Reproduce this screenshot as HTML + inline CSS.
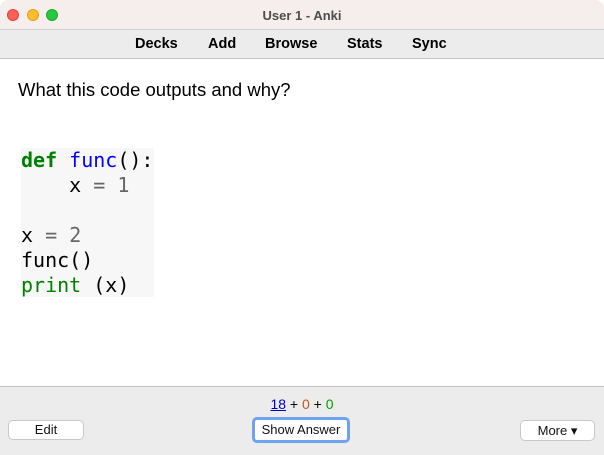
<!DOCTYPE html>
<html><head><style>
*{margin:0;padding:0;box-sizing:border-box}
body{width:604px;height:455px;overflow:hidden;background:#fff;font-family:"Liberation Sans",sans-serif;position:relative}
.title{position:absolute;left:0;top:0;width:604px;height:30px;background:#f6eded;border-radius:8px 8px 0 0;border-bottom:1px solid #cfcfcf}
.dot{position:absolute;top:9px;width:12px;height:12px;border-radius:50%}
.title .t{position:absolute;left:0;right:0;top:8px;text-align:center;font-size:13px;font-weight:bold;color:#4d4d4d}
.tool{position:absolute;top:30px;left:0;width:604px;height:29px;background:#ececec;border-bottom:1px solid #c8c8c8}
.tool span{position:absolute;top:6px;font-size:14.5px;font-weight:bold;color:#000}
.q{position:absolute;left:18px;top:79px;font-size:18.5px;color:#000}
pre{position:absolute;left:21px;top:148px;width:133px;height:149px;background:#f7f7f7;font-family:"DejaVu Sans Mono",monospace;font-size:20px;line-height:25px;color:#000}
.k{color:#008000;font-weight:bold}.f{color:#0000ff}.n{color:#666}.g{color:#008000}
.bot{position:absolute;left:0;top:386px;width:604px;height:69px;background:#ececec;border-top:1px solid #c0c0c0}
.btn{position:absolute;background:#fff;border:1px solid #c8c8c8;border-radius:5px;font-size:13px;text-align:center;color:#111}
</style></head><body>
<div class="title">
<div class="dot" style="left:7px;background:#fe5f57;border:1px solid #e0443e"></div>
<div class="dot" style="left:27px;background:#febc2e;border:1px solid #dea123"></div>
<div class="dot" style="left:46px;background:#28c840;border:1px solid #1aab29"></div>
<div class="t">User 1 - Anki</div>
</div>
<div class="tool">
<span style="left:135px">Decks</span><span style="left:208px">Add</span><span style="left:265px">Browse</span><span style="left:347px">Stats</span><span style="left:412px">Sync</span>
</div>
<div class="q">What this code outputs and why?</div>
<pre><span class="k">def</span> <span class="f">func</span>():
    x <span class="n">=</span> <span class="n">1</span>

x <span class="n">=</span> <span class="n">2</span>
func()
<span class="g">print</span> (x)</pre>
<div class="bot">
<div style="position:absolute;left:0;right:0;top:9px;text-align:center;font-size:14px"><span style="color:#0000c0;text-decoration:underline">18</span> + <span style="color:#c35617">0</span> + <span style="color:#00a000">0</span></div>
<div class="btn" style="left:8px;top:33px;width:76px;height:20px;line-height:18px">Edit</div>
<div class="btn" style="left:252px;top:30px;width:98px;height:26px;line-height:20px;border:3px solid #6fa3ef">Show Answer</div>
<div class="btn" style="left:520px;top:33px;width:75px;height:21px;line-height:19px">More ▾</div>
</div>
</body></html>
